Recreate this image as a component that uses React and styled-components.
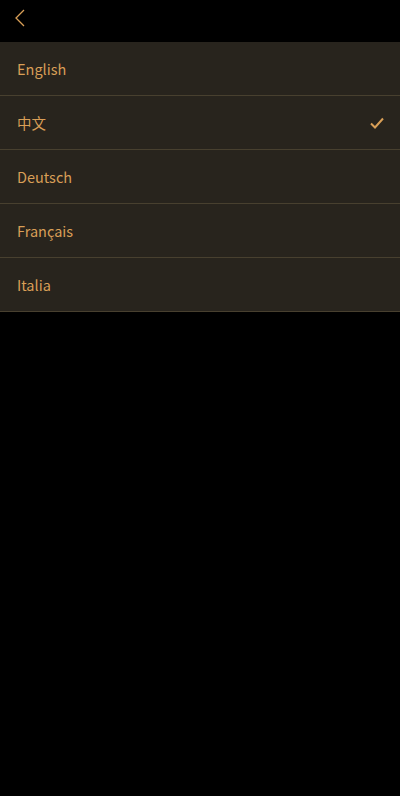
import React from "react";
import styled, { createGlobalStyle } from "styled-components";

const Global = createGlobalStyle`
  html, body { margin: 0; padding: 0; background: #000; }
  body { font-family: "Noto Sans CJK SC", "Noto Sans", sans-serif; }
`;

const Page = styled.div`
  width: 400px;
  min-height: 796px;
  background: #000;
`;

const Header = styled.header`
  height: 42px;
  display: flex;
  align-items: center;
  padding-left: 10px;
`;

const BackButton = styled.button`
  background: none;
  border: 0;
  padding: 0;
  width: 20px;
  height: 24px;
  margin-top: -7px;
  display: flex;
  align-items: center;
  justify-content: center;
  cursor: pointer;
`;

const List = styled.ul`
  list-style: none;
  margin: 0;
  padding: 0;
  background: #28241d;
`;

const Row = styled.li`
  box-sizing: border-box;
  height: 54px;
  border-bottom: 1px solid #48402f;
  display: flex;
  align-items: center;
  justify-content: space-between;
  padding: 0 17px;
  color: #d99f57;
  font-size: 14.5px;
`;

const Check = styled.svg`
  width: 14px;
  height: 12px;
  margin-right: -1px;
`;

const languages = ["English", "中文", "Deutsch", "Français", "Italia"];

export default function App() {
  const selected = "中文";
  return (
    <Page>
      <Global />
      <Header>
        <BackButton aria-label="back">
          <svg width="12" height="18" viewBox="0 0 12 18">
            <path d="M10 1 L2 9 L10 17" fill="none" stroke="#d99f57" strokeWidth="1.3" />
          </svg>
        </BackButton>
      </Header>
      <List>
        {languages.map((l) => (
          <Row key={l}>
            <span>{l}</span>
            {l === selected && (
              <Check viewBox="0 0 14 12">
                <path d="M1 6.5 L5 10.5 L13 1.5" fill="none" stroke="#d99f57" strokeWidth="2" />
              </Check>
            )}
          </Row>
        ))}
      </List>
    </Page>
  );
}
